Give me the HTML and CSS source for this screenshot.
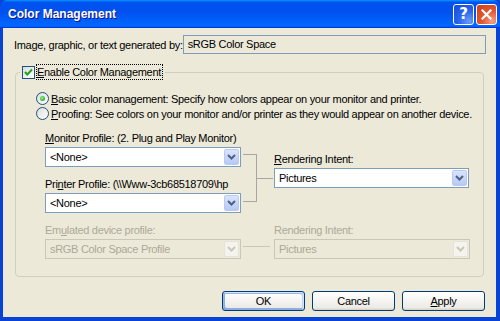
FILE: index.html
```html
<!DOCTYPE html>
<html lang="en">
<head>
    <meta charset="UTF-8">
    <title>Color Management</title>
    <link rel="stylesheet" href="styles.css">
</head>
<body>
    <div class="window">
        <div class="titlebar">
            <span class="title">Color Management</span>
            <div class="title-buttons">
                <span class="tbtn help">?</span>
                <span class="tbtn close">
                    <svg width="11" height="11" viewBox="0 0 11 11"><path d="M1.5 1.5 L9.5 9.5 M9.5 1.5 L1.5 9.5" stroke="#fff" stroke-width="2.2" stroke-linecap="square"/></svg>
                </span>
            </div>
        </div>

        <div class="content">
            <div class="source-row">
                <span class="source-label">Image, graphic, or text generated by:</span>
                <div class="readonly">sRGB Color Space</div>
            </div>

            <fieldset class="group">
                <legend>
                    <label class="check">
                        <span class="checkbox">
                            <svg width="11" height="11" viewBox="0 0 11 11"><path d="M2 5 L4.3 7.5 L9 2.5" fill="none" stroke="#21a121" stroke-width="2"/></svg>
                        </span>
                        <span class="focus"><u>E</u>nable Color Management</span>
                    </label>
                </legend>

                <div class="radios">
                    <label class="radio-row"><span class="radio on"></span><span><u>B</u>asic color management: Specify how colors appear on your monitor and printer.</span></label>
                    <label class="radio-row"><span class="radio"></span><span><u>P</u>roofing: See colors on your monitor and/or printer as they would appear on another device.</span></label>
                </div>

                <div class="profiles">
                    <div class="col">
                        <div class="field-label"><u>M</u>onitor Profile: (2. Plug and Play Monitor)</div>
                        <div class="combo">
                            <span class="combo-text">&lt;None&gt;</span>
                            <span class="combo-btn"><svg width="9" height="6" viewBox="0 0 9 6"><path d="M1 1 L4.5 4.5 L8 1" fill="none" stroke="#4d6185" stroke-width="2"/></svg></span>
                        </div>
                        <div class="field-label spaced">Pri<u>n</u>ter Profile: (\\Www-3cb68518709\hp</div>
                        <div class="combo">
                            <span class="combo-text">&lt;None&gt;</span>
                            <span class="combo-btn"><svg width="9" height="6" viewBox="0 0 9 6"><path d="M1 1 L4.5 4.5 L8 1" fill="none" stroke="#4d6185" stroke-width="2"/></svg></span>
                        </div>
                    </div>
                    <div class="link">
                        <div class="bracket"></div>
                        <div class="stub"></div>
                    </div>
                    <div class="col right">
                        <div class="field-label"><u>R</u>endering Intent:</div>
                        <div class="combo">
                            <span class="combo-text">Pictures</span>
                            <span class="combo-btn"><svg width="9" height="6" viewBox="0 0 9 6"><path d="M1 1 L4.5 4.5 L8 1" fill="none" stroke="#4d6185" stroke-width="2"/></svg></span>
                        </div>
                    </div>
                </div>

                <div class="profiles emulated disabled">
                    <div class="col">
                        <div class="field-label">Em<u>u</u>lated device profile:</div>
                        <div class="combo">
                            <span class="combo-text">sRGB Color Space Profile</span>
                            <span class="combo-btn"><svg width="9" height="6" viewBox="0 0 9 6"><path d="M1 1 L4.5 4.5 L8 1" fill="none" stroke="#c9c7ba" stroke-width="2"/></svg></span>
                        </div>
                    </div>
                    <div class="link">
                        <div class="line"></div>
                    </div>
                    <div class="col">
                        <div class="field-label">Rendering Intent:</div>
                        <div class="combo">
                            <span class="combo-text">Pictures</span>
                            <span class="combo-btn"><svg width="9" height="6" viewBox="0 0 9 6"><path d="M1 1 L4.5 4.5 L8 1" fill="none" stroke="#c9c7ba" stroke-width="2"/></svg></span>
                        </div>
                    </div>
                </div>
            </fieldset>

            <div class="buttons">
                <button class="btn default">OK</button>
                <button class="btn">Cancel</button>
                <button class="btn"><u>A</u>pply</button>
            </div>
        </div>
    </div>
</body>
</html>
```

FILE: styles.css
```css
/* Windows XP style dialog */
body {
    margin: 0;
    font-family: 'Liberation Sans', Arial, sans-serif;
    font-size: 11px;
    letter-spacing: -0.3px;
    color: #000;
}

.window {
    width: 500px;
    height: 321px;
    box-sizing: border-box;
    display: flex;
    flex-direction: column;
    background: #0842d6;
    padding: 0 4px 4px 3px;
}

/* Title bar */
.titlebar {
    height: 28px;
    flex: none;
    margin: 0 -4px 0 -3px;
    padding: 0 3px 0 8px;
    display: flex;
    align-items: center;
    justify-content: space-between;
    background: linear-gradient(180deg, #0997ff, #0053ee 8%, #0050ee 40%, #0066ff 88%, #0066ff 93%, #005bff 95%, #003dd7 96%, #003dd7);
    border-radius: 7px 7px 0 0;
}

.title {
    color: #fff;
    font-weight: bold;
    font-size: 12px;
    letter-spacing: 0;
    text-shadow: 1px 1px #0f1089;
}

.title-buttons {
    display: flex;
    gap: 2px;
}

.tbtn {
    width: 19px;
    height: 19px;
    border: 1px solid #fff;
    border-radius: 3px;
    display: flex;
    align-items: center;
    justify-content: center;
}

.help {
    background: radial-gradient(circle at 80% 85%, #6a9cf7, #2a66ee 45%, #1546d6);
    color: #fff;
    font-weight: bold;
    font-size: 15px;
    letter-spacing: 0;
    font-family: 'DejaVu Sans', sans-serif;
}

.close {
    background: radial-gradient(circle at 80% 85%, #f4a085, #e5582f 45%, #c8401c);
}

/* Client area */
.content {
    flex: 1;
    background: #ece9d8;
    padding: 7px 11px 0 11px;
    white-space: nowrap;
}

.source-row {
    display: flex;
    align-items: center;
}

.readonly {
    flex: none;
    margin-left: auto;
    width: 303px;
    height: 19px;
    box-sizing: border-box;
    border: 1px solid #7f9db9;
    padding-left: 4px;
    line-height: 17px;
}

/* Group box */
.group {
    margin: 10px 1px 0 1px;
    padding: 0 0 17px 0;
    border: 1px solid #d0d0bf;
    border-radius: 4px;
}

.group legend {
    margin-left: 4px;
    padding: 0 2px;
}

.check {
    display: flex;
    align-items: center;
    height: 16px;
}

.checkbox {
    width: 11px;
    height: 11px;
    border: 1px solid #1c5180;
    background: linear-gradient(135deg, #dcdcd7, #fff);
    margin-right: 1px;
    display: flex;
}

.focus {
    border: 1px dotted #000;
    padding: 0 1px 0 0;
    line-height: 14px;
}

.radios {
    padding: 11px 0 0 20px;
}

.radio-row {
    display: flex;
    align-items: center;
    height: 15px;
}

.radio {
    width: 11px;
    height: 11px;
    flex: none;
    border: 1px solid #1c5180;
    border-radius: 50%;
    background: linear-gradient(135deg, #dcdcd7, #fff);
    margin-right: 2px;
    display: flex;
    align-items: center;
    justify-content: center;
}

.radio.on::after {
    content: "";
    width: 5px;
    height: 5px;
    border-radius: 50%;
    background: radial-gradient(circle at 40% 40%, #a0f09a, #3bb935 60%, #21a121);
}

/* Profiles */
.profiles {
    display: flex;
    align-items: flex-start;
    padding-left: 29px;
    margin-top: 10px;
}

.col {
    width: 196px;
    flex: none;
}

.col.right {
    width: 195px;
    margin-top: 21px;
}

.field-label {
    line-height: 14px;
    margin-bottom: 2px;
}

.field-label.spaced {
    margin-top: 10px;
}

.combo {
    height: 20px;
    box-sizing: border-box;
    border: 1px solid #7f9db9;
    background: #fff;
    display: flex;
    align-items: center;
    justify-content: space-between;
}

.combo-text {
    padding-left: 4px;
}

.combo-btn {
    width: 15px;
    height: 16px;
    margin: 0 1px;
    border: 1px solid #bac9f4;
    border-radius: 2px;
    box-sizing: border-box;
    background: linear-gradient(180deg, #dae4fc, #b6c9f6);
    display: flex;
    align-items: center;
    justify-content: center;
}

.link {
    width: 33px;
    flex: none;
    display: flex;
    align-items: center;
    margin-top: 23px;
}

.bracket {
    width: 14px;
    height: 48px;
    margin-left: 2px;
    box-sizing: border-box;
    border: 1px solid #a7a6a0;
    border-left: none;
}

.stub {
    width: 16px;
    height: 1px;
    background: #a7a6a0;
}

.line {
    width: 27px;
    height: 1px;
    margin-left: 2px;
    background: #c9c7ba;
}

/* Disabled state */
.disabled {
    color: #aca899;
}

.disabled .combo {
    border-color: #c9c7ba;
    background: #ece9d8;
}

.disabled .combo-btn {
    border-color: #e6e4da;
    background: #f4f3ee;
}

/* Push buttons */
.buttons {
    display: flex;
    justify-content: flex-end;
    gap: 7px;
    margin-top: 14px;
}

.btn {
    width: 83px;
    height: 20px;
    padding: 0;
    font-family: inherit;
    font-size: 11px;
    letter-spacing: inherit;
    color: #000;
    border: 1px solid #003c74;
    border-radius: 3px;
    background: linear-gradient(180deg, #fff, #ecebe6 86%, #d6d0c5);
}

.btn.default {
    box-shadow: inset -1px 1px #cee7ff, inset 1px 2px #98b8ea, inset -2px 2px #bcd4f6, inset 1px -1px #89ade4, inset 2px -2px #89ade4;
}
```
